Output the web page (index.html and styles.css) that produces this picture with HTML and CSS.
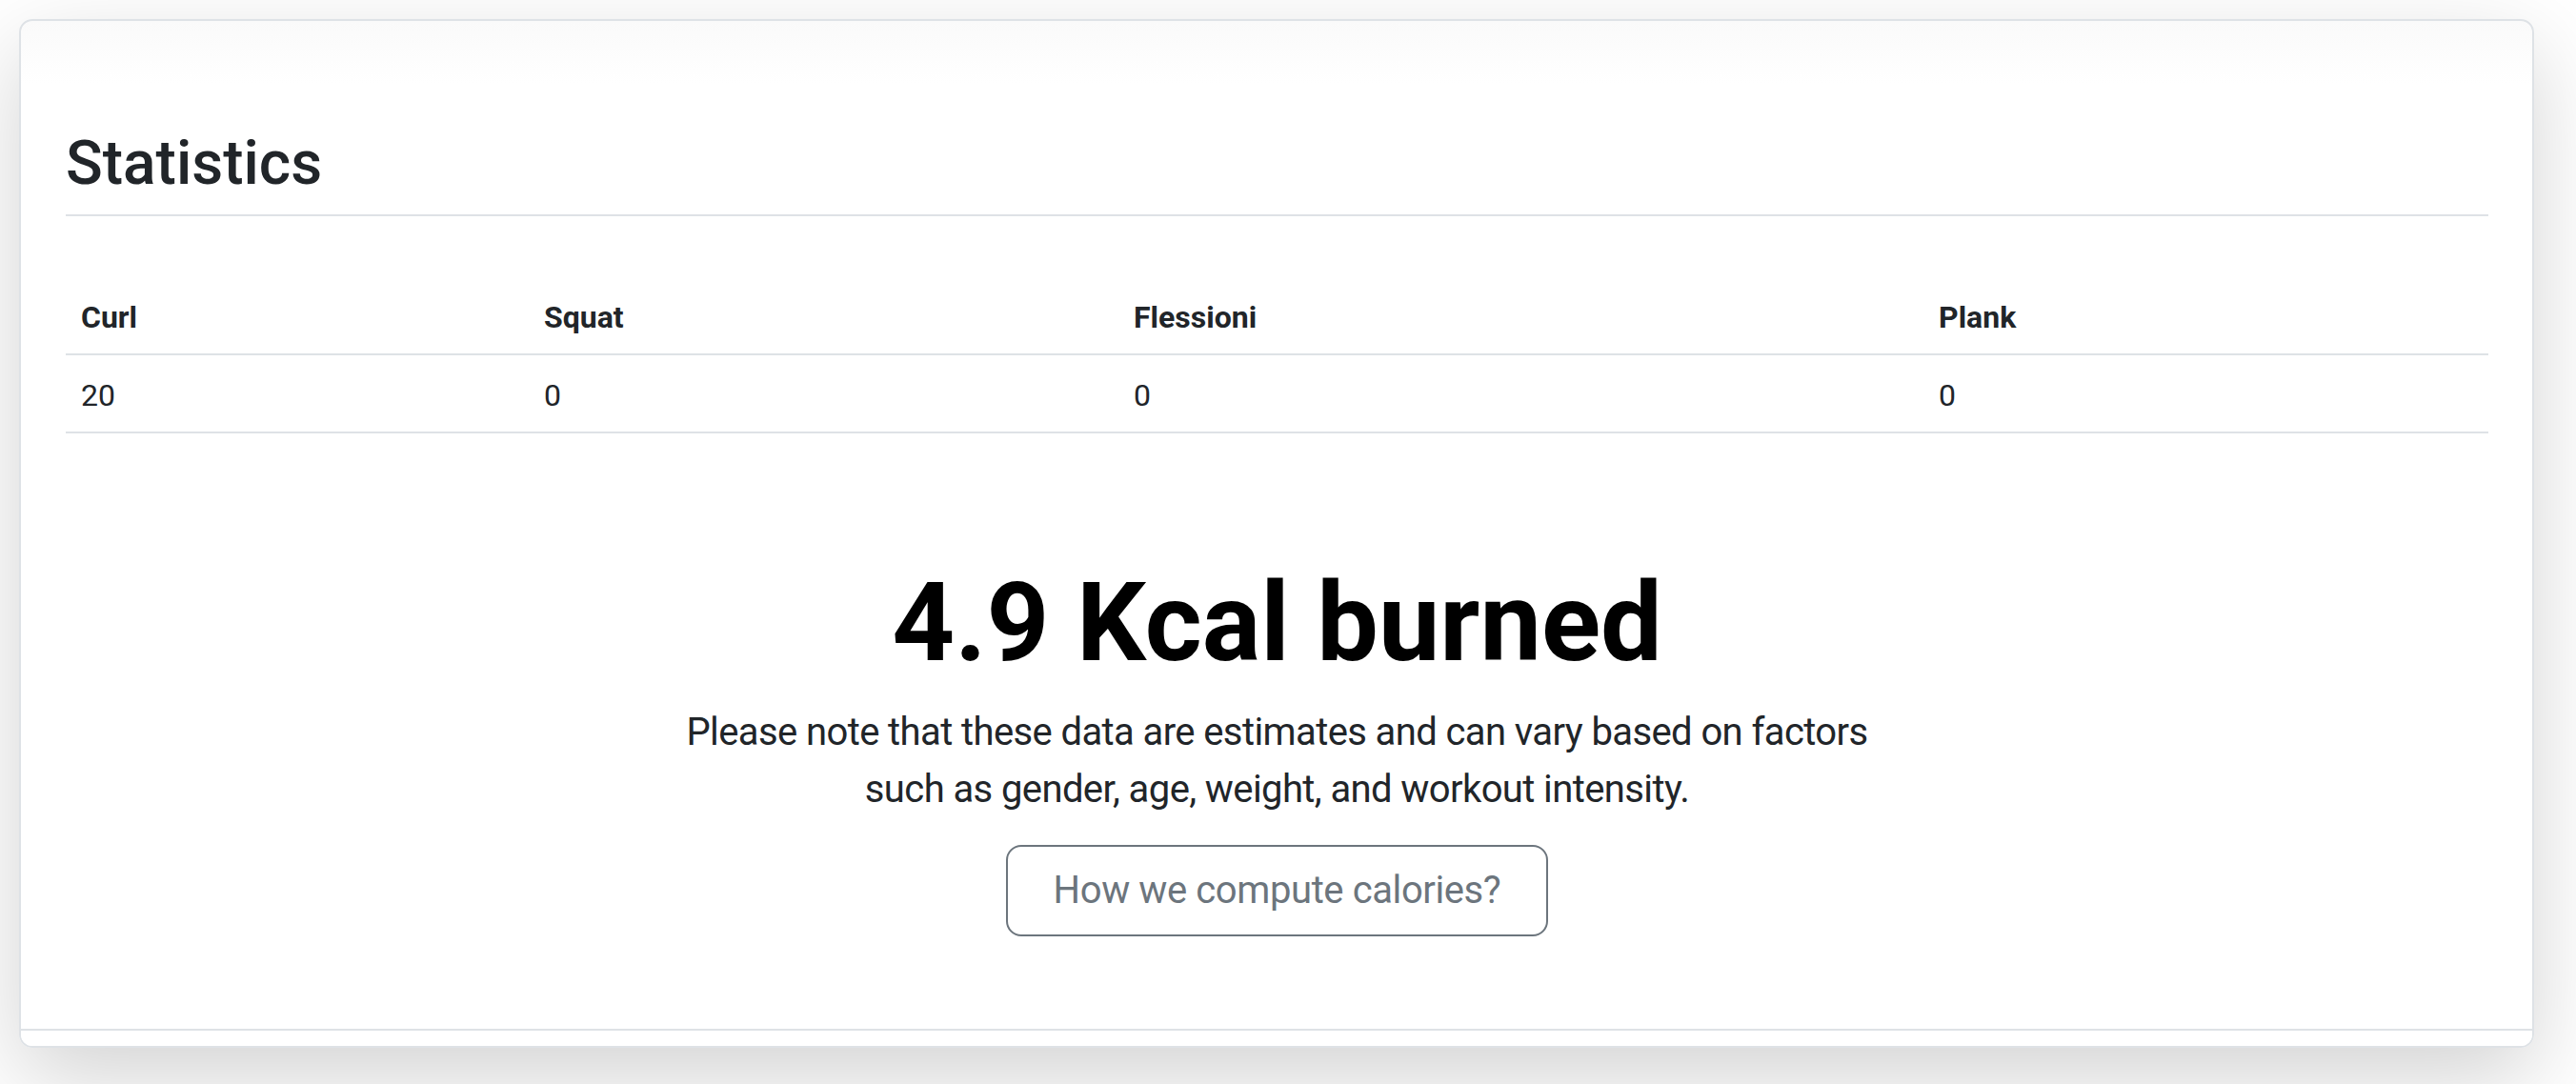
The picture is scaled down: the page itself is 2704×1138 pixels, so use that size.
FILE: index.html
```html
<!DOCTYPE html>
<html lang="en">
<head>
<meta charset="utf-8">
<title>Statistics</title>
<link rel="stylesheet" href="styles.css">
</head>
<body>
  <div class="card">
    <div class="card-body">
      <h2 class="section-title">Statistics</h2>
      <table class="stats-table">
        <colgroup>
          <col class="col-curl">
          <col class="col-squat">
          <col class="col-flessioni">
          <col class="col-plank">
        </colgroup>
        <thead>
          <tr>
            <th>Curl</th>
            <th>Squat</th>
            <th>Flessioni</th>
            <th>Plank</th>
          </tr>
        </thead>
        <tbody>
          <tr>
            <td>20</td>
            <td>0</td>
            <td>0</td>
            <td>0</td>
          </tr>
        </tbody>
      </table>
      <div class="summary">
        <h1 class="kcal">4.9 Kcal burned</h1>
        <p class="lead">Please note that these data are estimates and can vary based on factors<br>such as gender, age, weight, and workout intensity.</p>
        <button class="btn-outline" type="button">How we compute calories?</button>
      </div>
    </div>
    <div class="card-footer"></div>
  </div>
</body>
</html>
```

FILE: styles.css
```css
html {
  font-size: 32px;
  background: #ffffff;
}

body {
  margin: 0;
  min-height: 100vh;
  box-sizing: border-box;
  padding: 20px 44px 40px 20px;
  background: #ffffff;
  font-family: Roboto, "Noto Sans", "Liberation Sans", sans-serif;
  color: #212529;
  line-height: 1.5;
}

.card {
  background: linear-gradient(#fafafa, #ffffff 66px);
  border: 2px solid #dee2e6;
  border-radius: 14px;
  box-shadow: 0 32px 96px rgba(0, 0, 0, 0.175);
  overflow: hidden;
}

.card-body {
  padding: 112px 46px 97px 47px;
}

.section-title {
  margin: 0 0 64px 0;
  padding-bottom: 14px;
  border-bottom: 2px solid #dee2e6;
  font-size: 64px;
  font-weight: 500;
  line-height: 1.2;
  color: #212529;
}

.stats-table {
  width: 100%;
  border-collapse: collapse;
  table-layout: fixed;
  margin-bottom: 32px;
}

.col-curl { width: 486px; }
.col-squat { width: 619px; }
.col-flessioni { width: 845px; }
.col-plank { width: auto; }

.stats-table th,
.stats-table td {
  padding: 18px 16px 14px 16px;
  text-align: left;
  font-size: 32px;
  line-height: 48px;
  border-bottom: 2px solid #dee2e6;
  color: #212529;
}

.stats-table th {
  font-weight: 700;
}

.stats-table td {
  font-weight: 400;
}

.summary {
  display: flex;
  flex-direction: column;
  align-items: center;
  text-align: center;
  padding-top: 98px;
}

.kcal {
  margin: 0 0 16px 0;
  font-size: 115px;
  font-weight: 700;
  line-height: 1.2;
  letter-spacing: 0;
  color: #000000;
}

.lead {
  margin: 0 0 28px 0;
  font-size: 40px;
  font-weight: 400;
  line-height: 60px;
  letter-spacing: -0.6px;
  color: #212529;
}

.btn-outline {
  font-family: inherit;
  font-size: 40px;
  line-height: 60px;
  letter-spacing: -0.4px;
  padding: 16px 48px;
  color: #6c757d;
  background: transparent;
  border: 2px solid #6c757d;
  border-radius: 16px;
}

.card-footer {
  height: 16px;
  border-top: 2px solid #dee2e6;
  background: #ffffff;
}
```
